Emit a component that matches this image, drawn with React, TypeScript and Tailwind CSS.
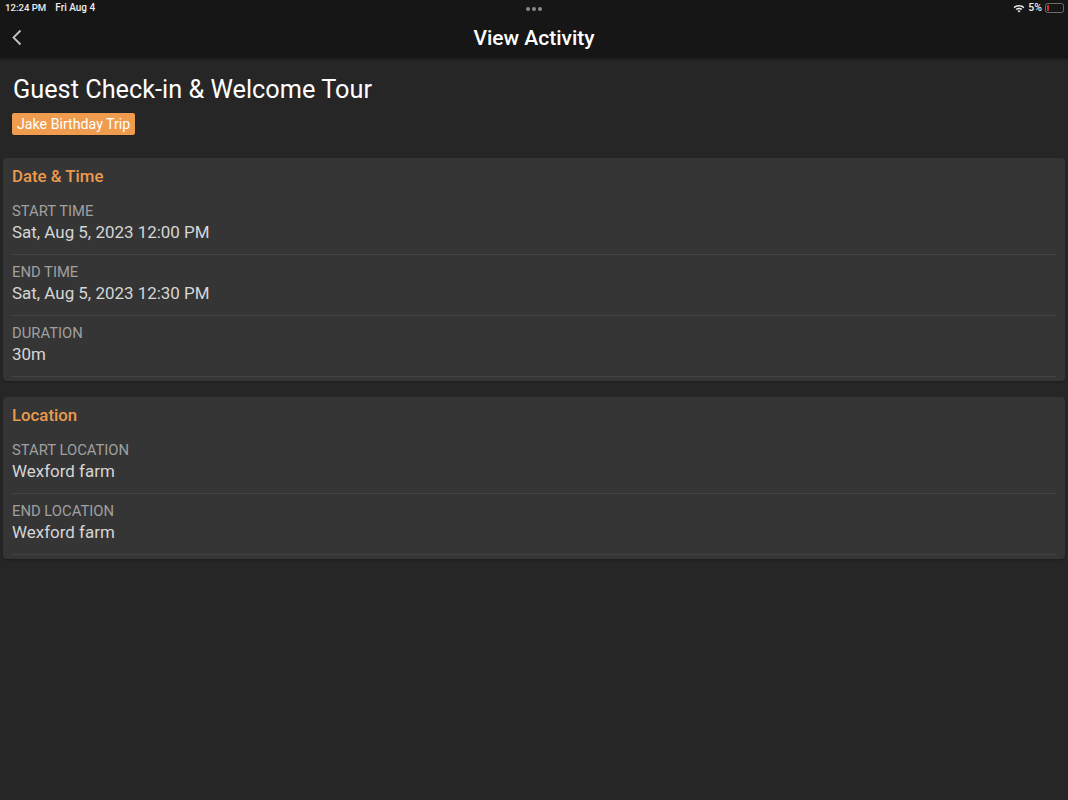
const FONT = "font-['Roboto',sans-serif]";

function Field({ label, value }: { label: string; value: string }) {
  return (
    <div className="h-[61px] border-b border-[#444444] pt-[7px]">
      <p className="text-[14.8px] leading-[20px] text-[#a0a0a0]">{label}</p>
      <p className="text-[16.95px] leading-[22px] text-[#d6d6d6]">{value}</p>
    </div>
  );
}

function Section({ title, fields }: { title: string; fields: { label: string; value: string }[] }) {
  return (
    <section className="mx-[3px] rounded-[4px] bg-[#353535] pb-[4px] pl-[9px] pr-[9px] shadow-[0_1px_2px_rgba(0,0,0,0.25)]">
      <h2 className="flex h-[36px] items-center pt-[3px] text-[16.8px] font-medium text-[#ec9a4e]">{title}</h2>
      {fields.map((f) => (
        <Field key={f.label} label={f.label} value={f.value} />
      ))}
    </section>
  );
}

export default function App() {
  return (
    <div className={`${FONT} flex h-[800px] w-[1068px] flex-col overflow-hidden bg-[#262626]`}>
      {/* Header */}
      <header className="relative h-[58px] shrink-0 bg-[#161616] shadow-[0_1px_4px_rgba(0,0,0,0.4)]">
        <div className="absolute left-[5px] top-[2px] flex gap-[9px] font-medium leading-[12px] text-[#ececec]">
          <span className="text-[9.6px]">12:24 PM</span>
          <span className="text-[10px]">Fri Aug 4</span>
        </div>
        <div className="absolute left-[526px] top-[7px] flex gap-[2px]">
          <span className="h-[4px] w-[4px] rounded-full bg-[#8a8a8a]" />
          <span className="h-[4px] w-[4px] rounded-full bg-[#8a8a8a]" />
          <span className="h-[4px] w-[4px] rounded-full bg-[#8a8a8a]" />
        </div>
        <div className="absolute right-[4px] top-[2px] flex items-center gap-[3px] text-[10.5px] font-medium leading-[12px] text-[#ececec]">
          <svg width="12" height="9" viewBox="0 0 12 9" fill="#ececec">
            <path d="M6 1C3.900 1 2 1.800.6 3.100l1 1.100C2.800 3.100 4.300 2.500 6 2.500s3.200.6 4.400 1.700l1-1.100C10 1.800 8.100 1 6 1z" />
            <path d="M6 3.700c-1.300 0-2.500.5-3.300 1.300l1 1.100c.6-.6 1.400-.9 2.300-.9s1.700.3 2.300.9l1-1.100C8.500 4.200 7.300 3.700 6 3.700z" />
            <path d="M6 6.300c-.6 0-1.100.2-1.500.6L6 8.500l1.500-1.600c-.4-.4-.9-.6-1.500-.6z" />
          </svg>
          <span>5%</span>
          <span className="flex h-[10px] w-[19px] items-center rounded-[2.5px] border border-[#6e6e6e] p-px">
            <span className="h-full w-[1.5px] bg-[#c8322b]" />
          </span>
        </div>
        <svg className="absolute left-[11px] top-[29px]" width="12" height="17" viewBox="0 0 12 17" fill="none" stroke="#c4c4c4" strokeWidth="1.8">
          <path d="M9.500 1.500 2.500 8.500l7 7" />
        </svg>
        <h1 className="absolute inset-x-0 top-[26px] text-center text-[21px] font-medium leading-[24px] text-white">View Activity</h1>
      </header>

      {/* Title */}
      <div className="flex h-[99.5px] shrink-0 flex-col items-start pl-[12px] pt-[17px]">
        <h2 className="pl-px text-[25.3px] leading-[30px] text-white">Guest Check-in &amp; Welcome Tour</h2>
        <span className="mt-[8px] rounded-[2px] bg-[#f09c4e] px-[5px] text-[14.2px] leading-[22px] text-white shadow-[0_0_1px_#111111]">Jake Birthday Trip</span>
      </div>

      <div className="flex flex-col gap-[16px]">
        <Section
          title="Date & Time"
          fields={[
            { label: "START TIME", value: "Sat, Aug 5, 2023 12:00 PM" },
            { label: "END TIME", value: "Sat, Aug 5, 2023 12:30 PM" },
            { label: "DURATION", value: "30m" },
          ]}
        />
        <Section
          title="Location"
          fields={[
            { label: "START LOCATION", value: "Wexford farm" },
            { label: "END LOCATION", value: "Wexford farm" },
          ]}
        />
      </div>
    </div>
  );
}
